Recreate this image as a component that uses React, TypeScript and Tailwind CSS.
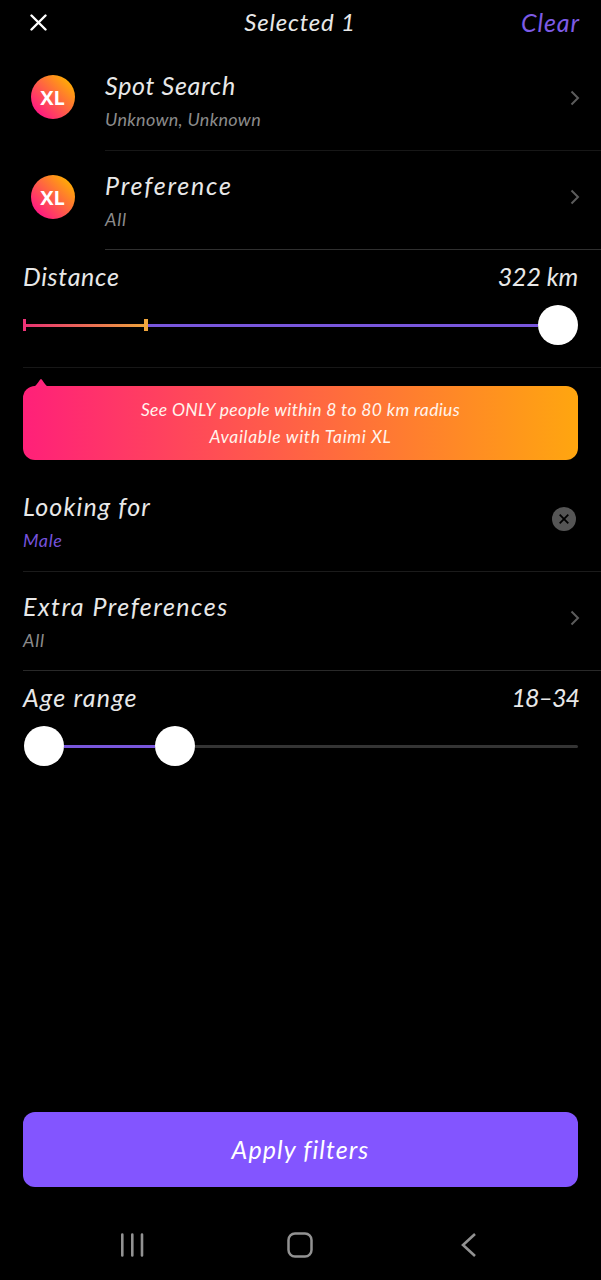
import React from 'react';

// XL badge shown next to premium filters
const XLBadge: React.FC = () => (
  <div className="flex h-11 w-11 shrink-0 items-center justify-center rounded-full bg-linear-to-tr/srgb from-[#ff1b80] from-15% to-[#ffa808] to-85% pt-0.5 pr-px">
    <span className="font-['Open_Sans',sans-serif] text-[20px] leading-none font-bold text-white not-italic">XL</span>
  </div>
);

const ChevronRight: React.FC = () => (
  <svg className="h-4 w-[10px] shrink-0" viewBox="0 0 10 16" fill="none" stroke="#5c5c5c" strokeWidth="2">
    <path d="M1.5 1.5 8 8l-6.5 6.5" />
  </svg>
);

const Knob: React.FC = () => <div className="h-10 w-10 shrink-0 rounded-full bg-white" />;

interface FilterRowProps {
  title: string;
  titleClass: string;
  value: string;
  valueClass: string;
  children?: React.ReactNode;
}

// Title with its current value, plus a trailing icon
const FilterRow: React.FC<FilterRowProps> = ({ title, titleClass, value, valueClass, children }) => (
  <div className="flex h-full flex-1 items-start justify-between">
    <div className="whitespace-nowrap">
      <div className={`text-[25px] leading-8 text-[#e8e8e8] ${titleClass}`}>{title}</div>
      <div className={`mt-1 text-[18px] leading-7 ${valueClass}`}>{value}</div>
    </div>
    {children}
  </div>
);

const App: React.FC = () => {
  return (
    <div className="flex h-[1280px] w-full flex-col overflow-hidden bg-black font-[Lato,'Open_Sans',sans-serif] text-[#e8e8e8] italic">
      {/* Header */}
      <header className="grid h-[51px] shrink-0 grid-cols-[1fr_auto_1fr] items-start pt-1.5 pr-[21px] pl-5 whitespace-nowrap">
        <svg className="mt-2 ml-2.5 h-[17px] w-[17px]" viewBox="0 0 17 17" stroke="white" strokeWidth="2.4" strokeLinecap="round">
          <path d="m1.5 1.5 14 14M15.5 1.5l-14 14" />
        </svg>
        <h1 className="text-[24px] leading-8 tracking-[0.8px]">Selected 1</h1>
        <button className="justify-self-end text-[25px] leading-8 tracking-[0.9px] text-[#7d5be6] italic">Clear</button>
      </header>

      {/* Premium filters */}
      <section className="flex h-[100px] shrink-0 pl-[31px]">
        <div className="mt-6 mr-[30px] shrink-0"><XLBadge /></div>
        <div className="flex flex-1 border-b border-[#171717] pt-[18px] pr-[21px]">
          <FilterRow title="Spot Search" titleClass="tracking-[0.7px]" value="Unknown, Unknown" valueClass="tracking-[0.3px] text-[#8b8b8b]">
            <div className="mt-[21px]"><ChevronRight /></div>
          </FilterRow>
        </div>
      </section>
      <section className="flex h-[99px] shrink-0 pl-[31px]">
        <div className="mt-6 mr-[30px] shrink-0"><XLBadge /></div>
        <div className="flex flex-1 border-b border-[#303030] pt-[18px] pr-[21px]">
          <FilterRow title="Preference" titleClass="tracking-[1.8px]" value="All" valueClass="tracking-[0.8px] text-[#8b8b8b]">
            <div className="mt-5"><ChevronRight /></div>
          </FilterRow>
        </div>
      </section>

      {/* Distance */}
      <section className="ml-[23px] h-[118px] shrink-0 border-b border-[#171717] pt-2.5 pr-[23px]">
        <div className="flex justify-between text-[25px] leading-8">
          <span className="tracking-[0.7px]">Distance</span>
          <span className="tracking-[-0.1px]">322 km</span>
        </div>
        <div className="mt-[13px] flex items-center">
          <div className="h-3 w-[3px] bg-[#ed3377]" />
          <div className="h-[3px] w-[118px] bg-linear-to-r/srgb from-[#e83372] to-[#eda13c]" />
          <div className="h-3 w-1 bg-[#f0a63d]" />
          <div className="h-[3px] flex-1 bg-[#7856dc]" />
          <Knob />
        </div>
      </section>

      {/* XL banner */}
      <section className="relative mx-[23px] mt-[18px] flex h-[74px] shrink-0 flex-col items-center justify-center rounded-xl bg-linear-to-r/srgb from-[#ff2079] to-[#ffa60f] text-[17.5px] leading-[27px] whitespace-nowrap text-[#fff4ec]">
        <svg className="absolute -top-[7px] left-2.5 h-2 w-4" viewBox="0 0 16 8" fill="#ff247b">
          <path d="M0 8C4 7 6 1 8 0c2 1 4 7 8 8Z" />
        </svg>
        <span className="tracking-[0.35px]">See ONLY people within 8 to 80 km radius</span>
        <span className="tracking-[0.65px]">Available with Taimi XL</span>
      </section>

      {/* Looking for */}
      <section className="ml-[23px] flex h-28 shrink-0 border-b border-[#1b1b1b] pt-[30px] pr-[25px]">
        <FilterRow title="Looking for" titleClass="tracking-[1.2px]" value="Male" valueClass="tracking-[0.6px] text-[#7552db]">
          <div className="mt-[17px] flex h-6 w-6 items-center justify-center rounded-full bg-[#555]">
            <svg className="h-2.5 w-2.5" viewBox="0 0 10 10" stroke="black" strokeWidth="1.8">
              <path d="m.7.7 8.6 8.6M9.3.7.7 9.3" />
            </svg>
          </div>
        </FilterRow>
      </section>
      <section className="ml-[23px] flex h-[99px] shrink-0 border-b border-[#292929] pt-[18px] pr-[21px]">
        <FilterRow title="Extra Preferences" titleClass="tracking-[1.5px]" value="All" valueClass="tracking-[0.8px] text-[#8b8b8b]">
          <div className="mt-5"><ChevronRight /></div>
        </FilterRow>
      </section>

      {/* Age range */}
      <section className="mx-[23px] shrink-0 pt-2.5">
        <div className="flex justify-between text-[25px] leading-8">
          <span className="tracking-[1.3px]">Age range</span>
          <span className="-mr-px tracking-[-1px]">18–34</span>
        </div>
        <div className="mt-[13px] flex items-center pl-px">
          <Knob />
          <div className="h-[3px] w-[91px] bg-[#7856dc]" />
          <Knob />
          <div className="h-[3px] flex-1 rounded-r-full bg-[#343434]" />
        </div>
      </section>

      <button className="mx-[23px] mt-auto h-[75px] shrink-0 rounded-xl bg-[#8355ff] text-[25px] tracking-[1.1px] text-white italic">
        Apply filters
      </button>

      {/* System navigation */}
      <nav className="flex h-[93px] shrink-0 items-center pt-[22px] pl-[120px]">
        <svg className="h-6 w-6" viewBox="0 0 24 24" stroke="#929292" strokeWidth="2.6" strokeLinecap="round">
          <path d="M2.3 1.5v21M12.3 1.5v21M22 1.5v21" />
        </svg>
        <svg className="ml-[143px] h-[26px] w-[26px]" viewBox="0 0 26 26" fill="none" stroke="#929292" strokeWidth="2.5">
          <rect x="1.5" y="1.5" width="23" height="23" rx="6.5" />
        </svg>
        <svg className="ml-[148px] h-6 w-[15px]" viewBox="0 0 15 24" fill="none" stroke="#929292" strokeWidth="2.6">
          <path d="M14 1 2 12l12 11" />
        </svg>
      </nav>
    </div>
  );
};

export default App;
